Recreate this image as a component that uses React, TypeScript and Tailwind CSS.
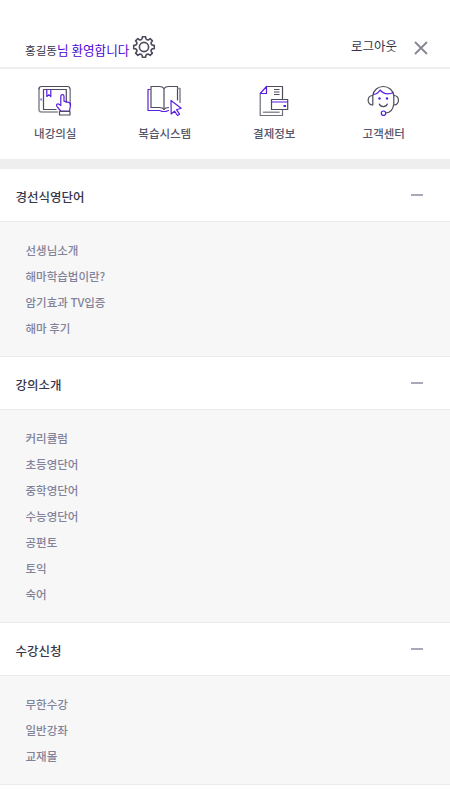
import type { ReactNode } from "react";

const DARK = "#4c4c5c";
const GRAY = "#8d8d99";
const PURPLE = "#5a1ee0";

const sections = [
  {
    title: "경선식영단어",
    items: ["선생님소개", "해마학습법이란?", "암기효과 TV입증", "해마 후기"],
  },
  {
    title: "강의소개",
    items: ["커리큘럼", "초등영단어", "중학영단어", "수능영단어", "공편토", "토익", "숙어"],
  },
  {
    title: "수강신청",
    items: ["무한수강", "일반강좌", "교재몰"],
  },
];

function Icon({ children }: { children: ReactNode }) {
  return (
    <svg
      width="36"
      height="36"
      viewBox="0 0 36 36"
      fill="none"
      stroke={DARK}
      strokeWidth="1.2"
      strokeLinecap="round"
      strokeLinejoin="round"
    >
      {children}
    </svg>
  );
}

function ClassroomIcon() {
  return (
    <Icon>
      <path d="M20.5 29H4.5A2.5 2.5 0 0 1 2 26.5V6" stroke={GRAY} strokeWidth="1.6" />
      <path d="M2 6a2.5 2.5 0 0 1 2.5-2.5h26A2.5 2.5 0 0 1 33 6" />
      <path d="M33.2 6v16" stroke={GRAY} strokeWidth="1.6" />
      <path d="M19 26.5H6.5v-20h22.8v13" />
      <path d="M9.8 6.5v7l2-1.700 2 1.700v-7" stroke={PURPLE} />
      <path d="M4.200 15.500v2" stroke="#9a7bea" strokeWidth="2" strokeLinecap="butt" />
      <path
        d="M23.800 22.500v-9.300a1.600 1.600 0 0 1 3.200 0v5l4.500 1.100c1.500.4 2.200 1.300 2 2.800L32.500 28h-8.800l-3.800-4.700c-1.200-1.700.7-3.200 2.100-2l1.800 1.200"
        stroke={PURPLE}
      />
      <path d="M22.500 28.500H33v3.500H22.500z" />
    </Icon>
  );
}

function ReviewIcon() {
  return (
    <Icon>
      <path d="M18 5.500c-1-1.400-2.500-2-4.500-2H5v21h8.500c2 0 3.500.6 4.500 2 1-1.400 2.500-2 4.500-2" />
      <path d="M18 5.500c1-1.400 2.500-2 4.500-2h9v13.500M18 5.500v21" />
      <path d="M32 5.500h2v14" stroke={GRAY} strokeWidth="1.600" />
      <path d="M4 6.500H2v21h11.500c1.200 0 1.800 1 3 1h3c1.200 0 1.800-1 3-1" stroke={PURPLE} />
      <path d="m25 17.500.2 13.500 3.300-2.800 3 4.300 2-1.300-3-4.500 4.700-1.500z" stroke={PURPLE} />
    </Icon>
  );
}

function PaymentIcon() {
  return (
    <Icon>
      <path d="M4.200 11v21.500h22.300v-5" stroke="#6d6d7b" />
      <path d="M26.500 15.500v-12H11" />
      <path d="M10.500 3.500v7H4.200z" stroke={PURPLE} />
      <path d="M18 6.500h5.500M18 9h5.500M18 11.500h5.500" strokeLinecap="butt" />
      <path d="M7.500 29.200H23" stroke={GRAY} strokeWidth="1.600" />
      <path d="M15.500 16.500h16.200v10H15.500z" />
      <path d="M16 19h15.200" stroke={PURPLE} />
      <path d="M27.500 22h2.500v2h-2.500z" fill={PURPLE} stroke="none" />
    </Icon>
  );
}

function SupportIcon() {
  return (
    <Icon>
      <path d="M7.800 12.500C8.500 7 13 3.500 18.300 3.500S28.200 7 28.800 12.500" />
      <path d="M7.800 12.500v9.500c-6.200.5-6.200-10 0-9.500zM28.800 12.500v9.500c6.200.5 6.200-10 0-9.500z" />
      <path d="M28.500 22c-.5 4.500-3.500 7.500-7.700 8" />
      <path d="M14.300 21c1 3.400 7 3.400 8 0" />
      <path d="M8.500 11.500c3-.4 5.400-2 6.500-4.500 3 3.500 7.500 5 13 2.800" stroke={PURPLE} />
      <circle cx="14.500" cy="15.500" r="1.200" fill={PURPLE} stroke="none" />
      <circle cx="22" cy="15.500" r="1.200" fill={PURPLE} stroke="none" />
      <circle cx="18.500" cy="30.200" r="2.200" stroke={PURPLE} />
    </Icon>
  );
}

// eight rounded teeth joined by concave valleys
function gearPath() {
  const point = (radius: number, degrees: number) => {
    const a = (degrees * Math.PI) / 180;
    return `${(12 + radius * Math.cos(a)).toFixed(2)} ${(12 + radius * Math.sin(a)).toFixed(2)}`;
  };
  let d = `M${point(10.4, -9)}`;
  for (let i = 0; i < 8; i++) {
    const a = i * 45;
    d += `L${point(10.4, a + 9)}L${point(8.7, a + 12)}Q${point(7.1, a + 22.5)} ${point(8.7, a + 33)}L${point(10.4, a + 36)}`;
  }
  return d + "Z";
}

function GearIcon() {
  return (
    <svg width="24" height="24" viewBox="0 0 24 24" fill="none" stroke={DARK} strokeWidth="1.6" strokeLinejoin="round">
      <path d={gearPath()} />
      <circle cx="12" cy="12" r="4.6" />
    </svg>
  );
}

const quickMenu = [
  { label: "내강의실", icon: <ClassroomIcon /> },
  { label: "복습시스템", icon: <ReviewIcon /> },
  { label: "결제정보", icon: <PaymentIcon /> },
  { label: "고객센터", icon: <SupportIcon /> },
];

export default function App() {
  return (
    <div className="min-h-screen bg-white font-['Noto_Sans_CJK_KR',sans-serif] text-[#36364a]">
      <header className="flex h-[69px] justify-between border-b-2 border-[#eee] pl-[25px] pr-[22px]">
        <div className="flex items-center pt-[27px]">
          <p className="pt-1.5 text-[12.6px] leading-5">
            <span className="text-[11.6px]">홍길동</span>
            <span className="text-[#4b05d4]">님 환영합니다</span>
          </p>
          <button type="button" aria-label="설정" className="ml-[3px]">
            <GearIcon />
          </button>
        </div>
        <div className="flex items-center pt-[27px]">
          <a href="#" className="pb-0.5 text-[12.5px] leading-5">
            로그아웃
          </a>
          <button type="button" aria-label="닫기" className="ml-[17px] pt-[2px]">
            <svg width="14" height="14" viewBox="0 0 14 14" stroke="#858593" strokeWidth="1.8">
              <path d="m1 1 12 12M13 1 1 13" />
            </svg>
          </button>
        </div>
      </header>

      <nav className="grid h-[90px] grid-cols-4 pr-3 pt-3.5">
        {quickMenu.map((item) => (
          <a key={item.label} href="#" className="flex flex-col items-center">
            {item.icon}
            <span className="mt-1 pl-px text-[11.5px] font-medium leading-5 text-[#55556b]">{item.label}</span>
          </a>
        ))}
      </nav>

      <main className="border-t-10 border-[#eee]">
        {sections.map((section) => (
          <section key={section.title}>
            <div className="flex h-[53px] items-center justify-between border-b border-[#ebebeb] pl-[15.5px] pr-[27px]">
              <h2 className="pt-[3px] text-[12.5px] font-medium leading-5">{section.title}</h2>
              <span className="h-0.5 w-3 bg-[#a7a9b9]" />
            </div>
            <ul className="border-b border-[#ebebeb] bg-[#f7f7f7] px-[25.5px] py-[15px] text-[11.5px] font-medium text-[#82839a]">
              {section.items.map((item) => (
                <li key={item} className="leading-[26px]">
                  {item}
                </li>
              ))}
            </ul>
          </section>
        ))}
      </main>
    </div>
  );
}
